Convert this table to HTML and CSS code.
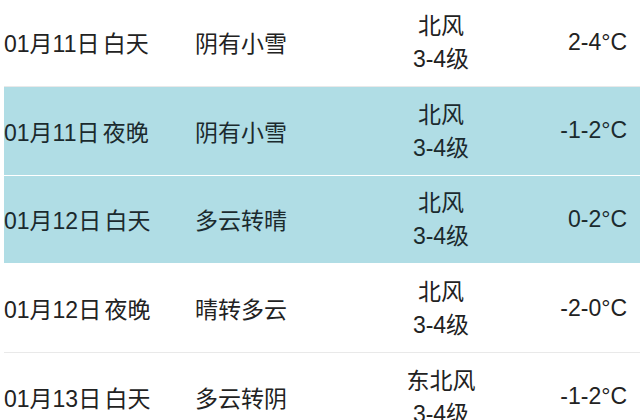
FILE: index.html
```html
<!DOCTYPE html>
<html lang="zh-CN">
<head>
<meta charset="utf-8">
<title>天气预报</title>
<link rel="stylesheet" href="styles.css">
</head>
<body>
<div class="table">
  <div class="row">
    <div class="date">01月11日 白天</div>
    <div class="weather">阴有小雪</div>
    <div class="wind">北风<br>3-4级</div>
    <div class="temp">2-4°C</div>
  </div>
  <div class="row hl">
    <div class="date">01月11日 夜晚</div>
    <div class="weather">阴有小雪</div>
    <div class="wind">北风<br>3-4级</div>
    <div class="temp">-1-2°C</div>
  </div>
  <div class="row hl">
    <div class="date">01月12日 白天</div>
    <div class="weather">多云转晴</div>
    <div class="wind">北风<br>3-4级</div>
    <div class="temp">0-2°C</div>
  </div>
  <div class="row">
    <div class="date">01月12日 夜晚</div>
    <div class="weather">晴转多云</div>
    <div class="wind">北风<br>3-4级</div>
    <div class="temp">-2-0°C</div>
  </div>
  <div class="row">
    <div class="date">01月13日 白天</div>
    <div class="weather">多云转阴</div>
    <div class="wind">东北风<br>3-4级</div>
    <div class="temp">-1-2°C</div>
  </div>
</div>
</body>
</html>
```
FILE: styles.css
```css
html, body {
  margin: 0;
  padding: 0;
  background: #ffffff;
  overflow: hidden;
}
body {
  font-family: "Liberation Sans", "Noto Sans CJK SC", sans-serif;
  font-size: 23px;
  color: #222222;
}
.table {
  margin-top: -1.67px;
  margin-left: 4px;
}
.row {
  display: grid;
  grid-template-columns: 191px 150px 192px 1fr;
  align-items: center;
  height: 88.67px;
  box-sizing: border-box;
  border-bottom: 1px solid #e9e9e9;
}
.row.hl {
  background: #b0dde5;
  border-bottom-color: #ffffff;
  color: #1b2a2e;
}
.date, .weather {
  white-space: nowrap;
}
.date {
  word-spacing: -3px;
}
.wind {
  text-align: center;
  line-height: 33px;
  padding-top: 2px;
}
.temp {
  text-align: right;
  padding-right: 13px;
}
```
